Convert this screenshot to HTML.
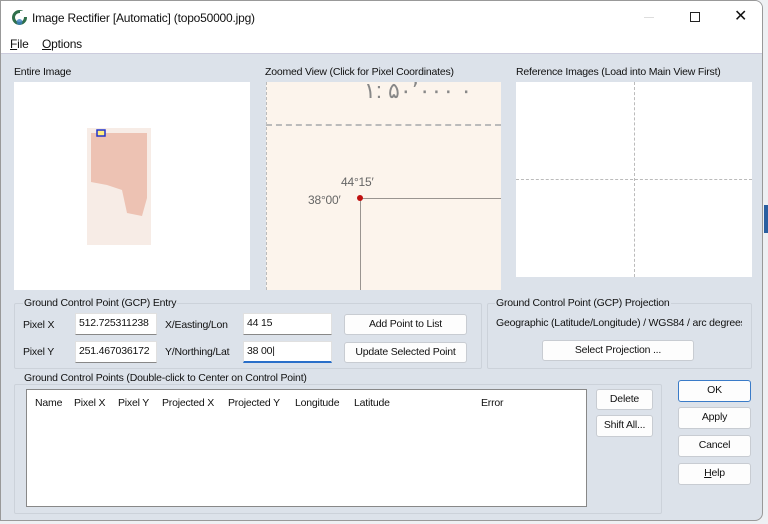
<!DOCTYPE html>
<html><head><style>
*{margin:0;padding:0;box-sizing:border-box}
body{width:768px;height:524px;background:#eef0f3;font-family:"Liberation Sans",sans-serif;font-size:10.5px;color:#111;position:relative;overflow:hidden;letter-spacing:-0.2px}
.win{position:absolute;left:0;top:0;width:763px;height:521px;background:#dce2ea;border:1px solid #999;border-radius:0 8px 8px 0;overflow:hidden}
.a{position:absolute}
.title{left:0;top:0;width:763px;height:32px;background:#fff}
.menu{left:0;top:32px;width:763px;height:21px;background:#fff;border-bottom:1px solid #ccd}
.pane{background:#fff}
.btn{position:absolute;background:#fdfdfd;border:1px solid #c8ccd2;border-radius:3px;text-align:center;font-size:10.5px;line-height:19px}
.inp{position:absolute;background:#fff;border:1px solid #e0e0e0;border-bottom:1px solid #888;font-size:10.5px;line-height:19px;padding-left:3px;overflow:hidden;white-space:nowrap}
.grp{position:absolute;border:1px solid #ccd2da;border-radius:2px}
.th{position:absolute;top:7px}
</style></head><body>
<div class="a" style="left:764px;top:205px;width:4px;height:28px;background:#2a5fa0"></div>
<div class="win">
<div class="a title">
 <svg class="a" style="left:10px;top:8px" width="17" height="17" viewBox="0 0 17 17"><circle cx="8.5" cy="8.5" r="7.5" fill="#2f6f4a"/><circle cx="8.5" cy="8.5" r="4.5" fill="#fff"/><rect x="9" y="2" width="8" height="6" fill="#fff"/><circle cx="8.5" cy="13" r="3" fill="#3b7ec0" opacity=".8"/></svg>
 <div class="a" style="left:31px;top:10px;font-size:12px">Image Rectifier [Automatic] (topo50000.jpg)</div>
 <div class="a" style="left:643px;top:16px;width:10px;height:1px;background:#ddd"></div>
 <div class="a" style="left:689px;top:11px;width:10px;height:10px;border:1px solid #222"></div>
 <div class="a" style="left:733px;top:5px;font-size:16px">✕</div>
</div>
<div class="a menu"><span class="a" style="left:9px;top:4px;font-size:12px"><u>F</u>ile</span><span class="a" style="left:41px;top:4px;font-size:12px"><u>O</u>ptions</span></div>

<div class="a" style="left:13px;top:65px">Entire Image</div>
<div class="a pane" style="left:13px;top:81px;width:236px;height:208px">
 <svg class="a" style="left:73px;top:46px" width="64" height="117"><rect width="64" height="117" fill="#f7ece6"/><path d="M4 5 L60 5 L60 70 L55 88 L40 85 L35 62 L20 57 L4 54 Z" fill="#eab8a6" opacity=".8"/><rect x="10" y="2" width="8" height="6" fill="#ffeb80" stroke="#2233cc" stroke-width="1.5"/></svg>
</div>
<div class="a" style="left:264px;top:65px">Zoomed View (Click for Pixel Coordinates)</div>
<div class="a" style="left:265px;top:81px;width:235px;height:208px;background:#fcf4ec;overflow:hidden">
 <div class="a" style="left:98px;top:-4px;font-size:22px;color:#888;letter-spacing:3px">۱: ۵۰٬۰۰۰ ۰</div>
 <div class="a" style="left:0;top:42px;width:235px;border-top:2px dashed #bbb"></div>
 <div class="a" style="left:0;top:0;height:208px;border-left:1px dashed #bbb"></div>
 <div class="a" style="left:93px;top:116px;width:142px;height:1px;background:#9a9490"></div>
 <div class="a" style="left:94px;top:116px;width:1px;height:92px;background:#9a9490"></div>
 <div class="a" style="left:75px;top:93px;font-size:12px;color:#666">44°15′</div>
 <div class="a" style="left:42px;top:111px;font-size:12px;color:#666">38°00′</div>
 <div class="a" style="left:91px;top:113px;width:6px;height:6px;border-radius:50%;background:#c01010"></div>
</div>
<div class="a" style="left:515px;top:65px">Reference Images (Load into Main View First)</div>
<div class="a pane" style="left:515px;top:81px;width:236px;height:195px">
 <div class="a" style="left:118px;top:0;height:195px;border-left:1px dashed #bbb"></div>
 <div class="a" style="left:0;top:97px;width:236px;border-top:1px dashed #bbb"></div>
</div>

<div class="grp" style="left:13px;top:302px;width:468px;height:66px"></div>
<div class="a" style="left:22px;top:296px;background:#dce2ea;padding:0 1px">Ground Control Point (GCP) Entry</div>
<div class="a" style="left:22px;top:318px">Pixel X</div>
<div class="a" style="left:22px;top:345px">Pixel Y</div>
<div class="inp" style="left:74px;top:312px;width:82px;height:22px">512.725311238</div>
<div class="inp" style="left:74px;top:340px;width:82px;height:22px">251.467036172</div>
<div class="a" style="left:164px;top:318px">X/Easting/Lon</div>
<div class="a" style="left:164px;top:345px">Y/Northing/Lat</div>
<div class="inp" style="left:242px;top:312px;width:89px;height:22px">44 15</div>
<div class="inp" style="left:242px;top:340px;width:89px;height:22px;border-bottom:2px solid #2a6fc9">38 00|</div>
<div class="btn" style="left:343px;top:313px;width:123px;height:21px">Add Point to List</div>
<div class="btn" style="left:343px;top:341px;width:123px;height:21px">Update Selected Point</div>

<div class="grp" style="left:486px;top:302px;width:265px;height:66px"></div>
<div class="a" style="left:494px;top:296px;background:#dce2ea;padding:0 1px">Ground Control Point (GCP) Projection</div>
<div class="a" style="left:495px;top:316px;white-space:nowrap;width:246px;overflow:hidden">Geographic (Latitude/Longitude) / WGS84 / arc degrees</div>
<div class="btn" style="left:541px;top:339px;width:152px;height:21px">Select Projection ...</div>

<div class="grp" style="left:13px;top:383px;width:648px;height:130px"></div>
<div class="a" style="left:22px;top:371px;background:#dce2ea;padding:0 1px">Ground Control Points (Double-click to Center on Control Point)</div>
<div class="a" style="left:25px;top:388px;width:561px;height:118px;background:#fff;border:1px solid #888">
 <span class="th" style="left:8px">Name</span><span class="th" style="left:47px">Pixel X</span><span class="th" style="left:91px">Pixel Y</span><span class="th" style="left:135px">Projected X</span><span class="th" style="left:201px">Projected Y</span><span class="th" style="left:268px">Longitude</span><span class="th" style="left:327px">Latitude</span><span class="th" style="left:454px">Error</span>
</div>
<div class="btn" style="left:595px;top:388px;width:57px;height:21px">Delete</div>
<div class="btn" style="left:595px;top:414px;width:57px;height:22px">Shift All...</div>
<div class="btn" style="left:677px;top:379px;width:73px;height:22px;border:1px solid #3a7bc8">OK</div>
<div class="btn" style="left:677px;top:406px;width:73px;height:22px">Apply</div>
<div class="btn" style="left:677px;top:434px;width:73px;height:22px">Cancel</div>
<div class="btn" style="left:677px;top:462px;width:73px;height:22px"><u>H</u>elp</div>
</div>
</body></html>
